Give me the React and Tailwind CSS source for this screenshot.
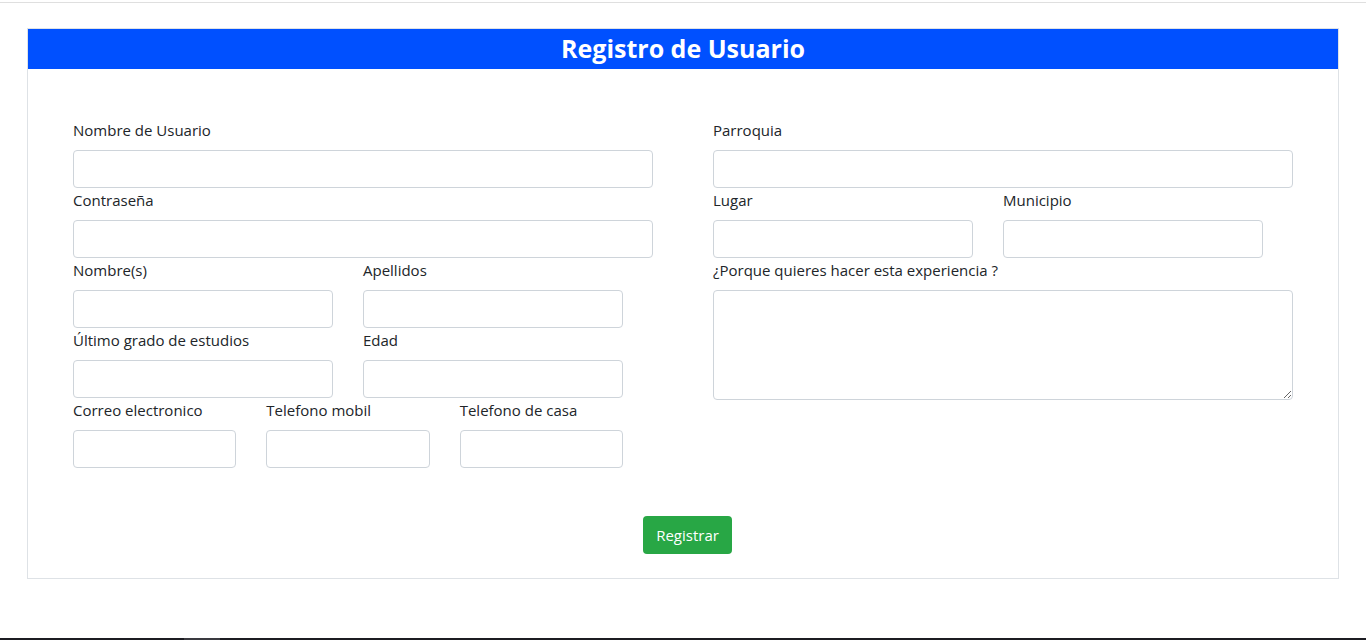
import React from 'react'

const font = { fontFamily: '"Open Sans", "Noto Sans", sans-serif' }

// Campo con etiqueta estilo bootstrap
const Field = ({ label, textarea }) => (
  <div className="flex flex-col">
    <label className="mb-2 text-[15px] leading-6 text-[#212529]">{label}</label>
    {textarea ? (
      <textarea className="h-[110px] w-full rounded border border-[#ced4da] bg-white px-3 py-1.5 outline-none" />
    ) : (
      <input className="h-[38px] w-full rounded border border-[#ced4da] bg-white px-3 outline-none" />
    )}
  </div>
)

const App = () => {
  return (
    <div className="flex h-[640px] flex-col bg-white" style={font}>
      <div className="h-[3px] shrink-0 border-b border-[#dfdfdf]" />

      <div className="mx-[27px] mt-[25px] shrink-0 border border-[#dee2e6]">
        {/* Encabezado */}
        <div className="flex h-[40px] items-center justify-center bg-[#0050ff] pb-[2px]">
          <h1 className="text-[25px] font-bold leading-none text-white">Registro de Usuario</h1>
        </div>

        <div className="px-[45px] pb-[24px] pt-[49px]">
          <div className="grid grid-cols-2 gap-x-[60px]">
            {/* Columna izquierda */}
            <div className="flex flex-col">
              <Field label="Nombre de Usuario" />
              <Field label="Contraseña" />
              <div className="grid w-[550px] grid-cols-2 gap-x-[30px]">
                <Field label="Nombre(s)" />
                <Field label="Apellidos" />
                <Field label="Último grado de estudios" />
                <Field label="Edad" />
              </div>
              <div className="grid w-[550px] grid-cols-3 gap-x-[30px]">
                <Field label="Correo electronico" />
                <Field label="Telefono mobil" />
                <Field label="Telefono de casa" />
              </div>
            </div>

            {/* Columna derecha */}
            <div className="flex flex-col">
              <Field label="Parroquia" />
              <div className="grid w-[550px] grid-cols-2 gap-x-[30px]">
                <Field label="Lugar" />
                <Field label="Municipio" />
              </div>
              <Field label="¿Porque quieres hacer esta experiencia ?" textarea />
            </div>
          </div>

          <div className="mt-[48px] flex justify-center pl-[9px]">
            <button className="h-[38px] rounded bg-[#28a745] px-[13px] text-[15px] text-white">Registrar</button>
          </div>
        </div>
      </div>

      <div className="flex-1" />
      <div className="flex h-[2px] shrink-0 bg-[#1c1c22]">
        <div className="ml-[184px] w-[36px] bg-[#3a3a40]" />
      </div>
    </div>
  )
}

export default App
